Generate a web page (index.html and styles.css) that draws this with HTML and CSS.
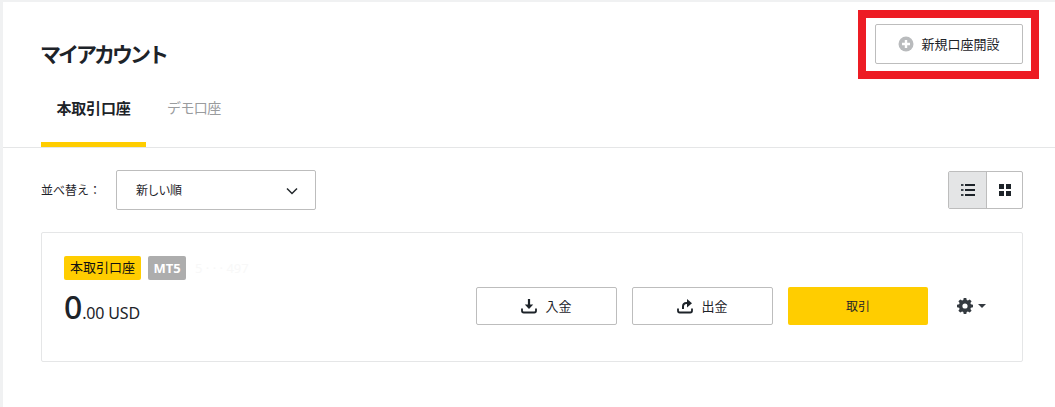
FILE: index.html
```html
<!DOCTYPE html>
<html lang="ja">
<head>
<meta charset="utf-8">
<title>マイアカウント</title>
<link rel="stylesheet" href="styles.css">
</head>
<body>
<main class="panel">
  <header class="page-head">
    <h1 class="title">マイアカウント</h1>
    <button class="btn btn-new">
      <svg class="ico-plus" width="16" height="16" viewBox="0 0 16 16"><circle cx="8" cy="8" r="7.5" fill="#b9bbbd"/><path d="M8 4v8M4 8h8" stroke="#fff" stroke-width="2.4"/></svg>
      <span class="btn-label">新規口座開設</span>
    </button>
    <span class="annotation"></span>
  </header>
  <nav class="tabs">
    <a class="tab tab-active">本取引口座</a>
    <a class="tab tab-muted">デモ口座</a>
  </nav>
  <section class="toolbar">
    <div class="sort">
      <span class="sort-label">並べ替え：</span>
      <div class="select">
        <span class="select-value">新しい順</span>
        <svg class="chevron" width="14" height="8" viewBox="0 0 14 8"><path d="M2 1.500l5 5 5-5" fill="none" stroke="#23282c" stroke-width="1.500"/></svg>
      </div>
    </div>
    <div class="view-toggle">
      <span class="view view-on">
        <svg width="14" height="12" viewBox="0 0 14 12"><path d="M0 0h2.500v2H0zM0 5h2.500v2H0zM0 10h2.500v2H0z" fill="#3b4248"/><path d="M4 0h10v2H4zM4 5h10v2H4zM4 10h10v2H4z" fill="#1d2329"/></svg>
      </span>
      <span class="view">
        <svg width="12" height="12" viewBox="0 0 12 12"><path d="M0 0h5v5H0zM7 0h5v5H7zM0 7h5v5H0zM7 7h5v5H7z" fill="#1d2329"/></svg>
      </span>
    </div>
  </section>
  <article class="card">
    <div class="card-info">
      <div class="badges">
        <span class="badge badge-real">本取引口座</span>
        <span class="badge badge-mt">MT5</span>
        <span class="acct-no">5 · · · 497</span>
      </div>
      <div class="balance"><span class="big">0</span>.00 USD</div>
    </div>
    <div class="actions">
      <button class="btn btn-act">
        <svg width="16" height="16" viewBox="0 0 16 16"><path d="M8 1v8.500" stroke="#1d2329" stroke-width="2.200" fill="none"/><path d="M3.800 6.500h8.400L8 11z" fill="#1d2329"/><path d="M1 10.500v2.300c0 1 .7 1.700 1.700 1.700h10.600c1 0 1.700-.7 1.700-1.700v-2.300" stroke="#1d2329" stroke-width="1.800" fill="none"/></svg>
        <span class="btn-label">入金</span>
      </button>
      <button class="btn btn-act">
        <svg width="16" height="16" viewBox="0 0 16 16"><path d="M6 11V8.500C6 6.500 7.500 5 9.500 5h1.500" stroke="#1d2329" stroke-width="2" fill="none"/><path d="M10 1l5 4.200-5 4.200z" fill="#1d2329"/><path d="M1 10.500v2.300c0 1 .7 1.700 1.700 1.700h10.600c1 0 1.700-.7 1.700-1.700v-2.300" stroke="#1d2329" stroke-width="1.800" fill="none"/></svg>
        <span class="btn-label">出金</span>
      </button>
      <button class="btn btn-trade">取引</button>
      <span class="gear-menu">
        <svg width="16" height="16" viewBox="0 0 16 16"><path fill="#343a40" fill-rule="evenodd" d="M6.700 0h2.600l.4 2.100 1.200.5L12.700 1.400l1.900 1.900-1.200 1.800.5 1.200 2.100.4v2.600l-2.100.4-.5 1.200 1.200 1.800-1.900 1.900-1.800-1.200-1.200.5-.4 2.100H6.700l-.4-2.100-1.200-.5-1.800 1.200-1.900-1.900 1.200-1.800-.5-1.200L0 9.300V6.700l2.100-.4.5-1.200-1.200-1.800 1.900-1.900 1.800 1.200 1.200-.5zM8 5.400a2.600 2.600 0 1 0 0 5.200 2.600 2.600 0 0 0 0-5.200z"/></svg>
        <span class="caret"></span>
      </span>
    </div>
  </article>
</main>
</body>
</html>
```
FILE: styles.css
```css
* { box-sizing: border-box; }
html, body { margin: 0; height: 100%; }
body {
  background: #f0f1f2;
  padding: 2px 0 0 3px;
  overflow: hidden;
  font-family: "Noto Sans", "Noto Sans CJK JP", sans-serif;
  color: #1d2329;
}
.panel { background: #fff; height: 405px; }
.page-head {
  position: relative;
  display: flex;
  justify-content: space-between;
  align-items: flex-start;
  height: 76px;
  padding: 22px 32px 0 38px;
}
.title { margin: 11px 0 0 -1px; font-size: 21px; line-height: 38px; font-weight: 700; letter-spacing: -3px; }
.btn {
  display: flex;
  align-items: center;
  justify-content: center;
  gap: 8px;
  border: 1px solid #bdbdbd;
  border-radius: 2px;
  background: #fff;
  font: inherit;
  color: #1d2329;
  font-size: 13px;
  padding: 0;
}
.btn-label { margin-bottom: 2px; }
.btn-new { width: 148px; height: 40px; gap: 7px; }
.annotation {
  position: absolute;
  left: 855px;
  top: 8px;
  width: 181px;
  height: 69px;
  border: 8px solid #ed1c24;
}
.tabs {
  display: flex;
  gap: 22px;
  height: 70px;
  padding-left: 38px;
  border-bottom: 1px solid #e5e6e7;
}
.tab {
  display: flex;
  justify-content: center;
  width: 105px;
  height: 69px;
  padding-top: 18px;
  font-size: 15px;
  line-height: 24px;
}
.tab-active { font-weight: 700; border-bottom: 5px solid #ffcd00; letter-spacing: -0.2px; }
.tab-muted { width: auto; margin-left: -1px; padding-top: 18px; font-size: 14px; letter-spacing: -0.6px; color: #9a9c9e; }
.toolbar {
  display: flex;
  justify-content: space-between;
  align-items: center;
  height: 40px;
  margin-top: 22px;
  padding: 0 32px 0 38px;
}
.sort { display: flex; align-items: center; gap: 19px; }
.sort-label { width: 56px; font-size: 12px; white-space: nowrap; }
.select {
  display: flex;
  justify-content: space-between;
  align-items: center;
  width: 200px;
  height: 40px;
  padding: 0 16px 0 19px;
  border: 1px solid #bdbdbd;
  border-radius: 2px;
  font-size: 12px;
}
.select-value { letter-spacing: -0.7px; }
.chevron { margin-top: 2px; }
.view-toggle { display: flex; width: 75px; height: 38px; border: 1px solid #bdbdbd; border-radius: 2px; }
.view { flex: 1; display: flex; align-items: center; justify-content: center; }
.view-on { flex: 0 0 38px; background: #e4e5e6; border-right: 1px solid #bdbdbd; }
.card {
  display: flex;
  justify-content: space-between;
  height: 130px;
  margin: 22px 32px 0 38px;
  border: 1px solid #e5e6e7;
  border-radius: 2px;
  padding: 23px 0 0 22px;
}
.badges { display: flex; align-items: center; gap: 7px; }
.badge {
  display: flex;
  align-items: center;
  justify-content: center;
  height: 24px;
  border-radius: 2px;
  font-size: 13px;
}
.badge-real { width: 77px; padding-bottom: 3px; background: #ffcd00; color: #111; }
.badge-mt { width: 38px; background: #adadad; color: #fff; font-weight: 700; }
.acct-no { margin-left: 2px; font-size: 13px; color: #f8f8f8; }
.balance { margin-top: 5px; font-size: 16px; line-height: 44px; letter-spacing: -0.15px; color: #1d2329; }
.big { font-size: 32px; font-weight: 500; }
.actions { display: flex; align-items: flex-start; gap: 15px; padding-top: 31px; }
.btn-act { width: 141px; height: 38px; }
.btn-trade { width: 140px; height: 38px; background: #ffcd00; border: 0; font-size: 12px; }
.gear-menu { display: flex; align-items: center; gap: 5px; height: 38px; margin: 0 36px 0 14px; }
.caret { border: 4.500px solid transparent; border-top-color: #343a40; border-bottom: 0; }
```
